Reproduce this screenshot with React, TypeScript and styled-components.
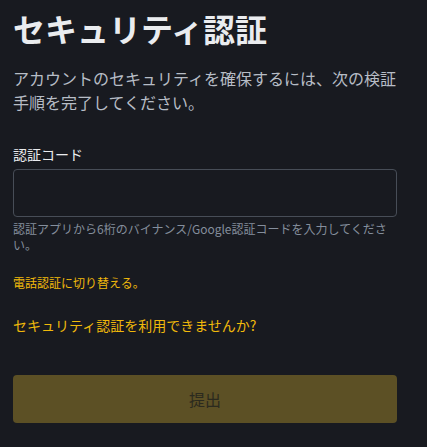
import React from "react";
import styled, { createGlobalStyle } from "styled-components";

const Global = createGlobalStyle`
  html, body { margin: 0; padding: 0; background: #181a20; }
  body { font-family: "Noto Sans CJK JP", "Noto Sans", sans-serif; }
  * { box-sizing: border-box; }
`;

const Page = styled.div`
  width: 427px;
  height: 447px;
  background: #181a20;
  padding: 8px 30px 0 13px;
  display: flex;
  flex-direction: column;
`;

const Title = styled.h1`
  margin: 0;
  font-size: 32px;
  line-height: 40px;
  font-weight: 700;
  color: #eaecef;
`;

const Subtitle = styled.p`
  margin: 18px 0 0;
  font-size: 16px;
  line-height: 24px;
  color: #b7bdc6;
`;

const Field = styled.div`
  margin-top: 30px;
  display: flex;
  flex-direction: column;
`;

const Label = styled.label`
  font-size: 14px;
  line-height: 20px;
  color: #eaecef;
  margin-bottom: 5px;
`;

const Input = styled.input`
  height: 48px;
  width: 100%;
  background: transparent;
  border: 1px solid #474d57;
  border-radius: 4px;
  outline: none;
  color: #eaecef;
  font-size: 14px;
  padding: 0 12px;
`;

const Helper = styled.div`
  margin-top: 4px;
  font-size: 12px;
  line-height: 16px;
  color: #848e9c;
`;

const SmallLink = styled.a`
  margin-top: 22px;
  font-size: 12px;
  line-height: 16px;
  color: #f0b90b;
  text-decoration: none;
`;

const Link = styled.a`
  margin-top: 24px;
  font-size: 14px;
  line-height: 20px;
  color: #f0b90b;
  text-decoration: none;
`;

const Submit = styled.button`
  margin-top: 40px;
  height: 48px;
  width: 100%;
  border: none;
  border-radius: 4px;
  background: #5c5025;
  color: #2b2a1e;
  font-family: inherit;
  font-size: 16px;
`;

export default function App() {
  return (
    <>
      <Global />
      <Page>
        <Title>セキュリティ認証</Title>
        <Subtitle>アカウントのセキュリティを確保するには、次の検証手順を完了してください。</Subtitle>
        <Field>
          <Label>認証コード</Label>
          <Input />
          <Helper>認証アプリから6桁のバイナンス/Google認証コードを入力してください。</Helper>
        </Field>
        <SmallLink>電話認証に切り替える。</SmallLink>
        <Link>セキュリティ認証を利用できませんか?</Link>
        <Submit disabled>提出</Submit>
      </Page>
    </>
  );
}
